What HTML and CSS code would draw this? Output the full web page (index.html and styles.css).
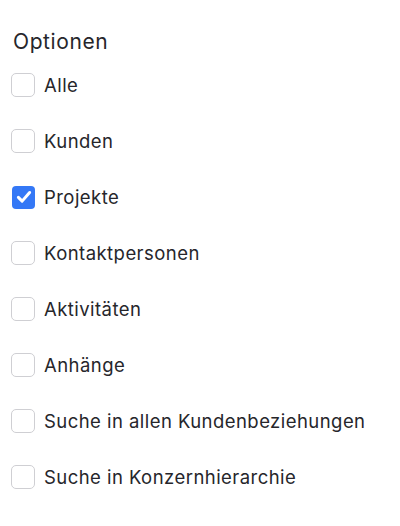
FILE: index.html
```html
<!DOCTYPE html>
<html lang="de">
<head>
<meta charset="utf-8">
<link rel="stylesheet" href="styles.css">
</head>
<body>
<div class="panel">
  <h2 class="title">Optionen</h2>
  <ul class="options">
    <li class="option"><span class="box"></span><span class="label">Alle</span></li>
    <li class="option"><span class="box"></span><span class="label">Kunden</span></li>
    <li class="option"><span class="box checked"><svg viewBox="0 0 24 24" width="18" height="18"><path d="M4.5 12.5 L9.5 17.5 L19.5 6" fill="none" stroke="#fff" stroke-width="4" stroke-linecap="round" stroke-linejoin="round"/></svg></span><span class="label">Projekte</span></li>
    <li class="option"><span class="box"></span><span class="label">Kontaktpersonen</span></li>
    <li class="option"><span class="box"></span><span class="label">Aktivitäten</span></li>
    <li class="option"><span class="box"></span><span class="label">Anhänge</span></li>
    <li class="option"><span class="box"></span><span class="label">Suche in allen Kundenbeziehungen</span></li>
    <li class="option"><span class="box"></span><span class="label">Suche in Konzernhierarchie</span></li>
  </ul>
</div>
</body>
</html>
```
FILE: styles.css
```css
html, body {
  margin: 0;
  padding: 0;
  background: #fff;
}
body {
  font-family: Inter, "Open Sans", sans-serif;
  color: #26262b;
}
.panel {
  padding: 28px 11px 0 11px;
}
.title {
  margin: 0 0 0 2px;
  font-size: 21px;
  font-weight: 400;
  line-height: 28px;
  letter-spacing: 0.6px;
}
.options {
  list-style: none;
  margin: 17px 0 0 0;
  padding: 0;
  display: flex;
  flex-direction: column;
  gap: 32px;
}
.option {
  display: flex;
  align-items: center;
  gap: 9px;
  height: 24px;
}
.box {
  box-sizing: border-box;
  width: 24px;
  height: 24px;
  border: 1px solid #cfcfd3;
  border-radius: 5px;
  background: #fff;
  display: flex;
  align-items: center;
  justify-content: center;
  flex: none;
}
.box.checked {
  width: 23px;
  height: 23px;
  margin-left: 1px;
  margin-right: 0;
  border: none;
  background: #3478f6;
  border-radius: 4px;
}
.label {
  font-size: 18.5px;
  line-height: 24px;
  letter-spacing: 0.45px;
}
```
